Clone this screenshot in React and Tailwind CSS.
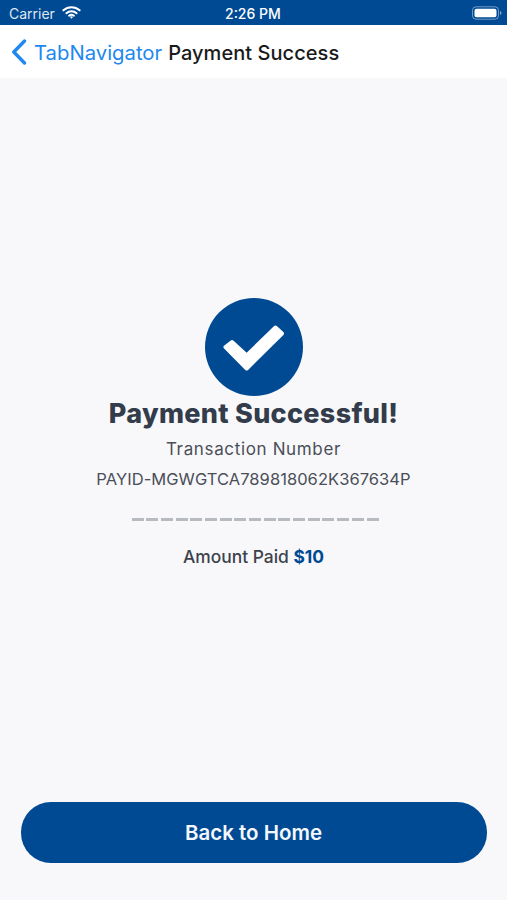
import React from "react";

const sans = "font-['Inter','Liberation_Sans',sans-serif]";

function Wifi() {
  return (
    <svg width="19" height="15" viewBox="0 0 20 15" fill="none" stroke="#fff" strokeLinecap="round">
      <path d="M1.5 5.2C6.2 .9 13.8 .9 18.5 5.2" strokeWidth="2.2" />
      <path d="M4.6 8.2C7.6 5.6 12.4 5.6 15.4 8.2" strokeWidth="2.2" />
      <path d="M7.4 10.9C8.9 9.8 11.1 9.8 12.6 10.9" strokeWidth="2" />
      <path d="M10 14l1.6-1.7a2.3 2.3 0 0 0-3.2 0z" fill="#fff" stroke="none" />
    </svg>
  );
}

function Battery() {
  return (
    <svg width="30" height="14" viewBox="0 0 30 14" fill="none">
      <rect x="0.5" y="0.8" width="26" height="12.4" rx="3.5" stroke="#fff" strokeOpacity="0.45" />
      <rect x="2.5" y="2.8" width="22" height="8.4" rx="2" fill="#fff" />
      <path d="M28 5v4c.9-.3 1.5-1.1 1.5-2s-.6-1.7-1.5-2z" fill="#fff" fillOpacity="0.5" />
    </svg>
  );
}

export default function App() {
  return (
    <div className={`flex h-[900px] w-[507px] flex-col overflow-hidden bg-[#f8f8fb] ${sans}`}>
      <div className="relative flex h-[25px] shrink-0 items-center justify-between bg-[#004a94] pl-[9px] pr-[5px] text-white">
        <div className="flex items-center gap-[7px]">
          <span className="mt-[2px] text-[14px] leading-none text-[#dfe7f1]">Carrier</span>
          <Wifi />
        </div>
        <span className="absolute left-[225px] top-[6px] text-[14px] font-medium leading-[15px]">2:26 PM</span>
        <Battery />
      </div>

      <div className="flex h-[53px] shrink-0 items-center bg-white pl-[11px]">
        <svg width="16" height="26" viewBox="0 0 16 26" fill="none" stroke="#2088ee" strokeWidth="3.4" strokeLinecap="round" strokeLinejoin="round">
          <path d="M13.5 2 2.8 13l10.7 11" />
        </svg>
        <span className="ml-[7px] mt-[3px] text-[20.3px] leading-none text-[#2088ee]">TabNavigator</span>
        <span className="ml-[6px] mt-[3px] text-[20px] font-medium leading-none tracking-[0.05px] text-[#1a1a1a]">Payment Success</span>
      </div>

      <div className="flex flex-1 flex-col items-center pt-[220px]">
        <div className="flex h-[98px] w-[98px] items-center justify-center rounded-full bg-[#004a94]">
          <svg width="64" height="50" viewBox="0 0 64 50" fill="#fff" stroke="#fff" strokeWidth="4" strokeLinejoin="round">
            <path d="M3.5 25 10 20 24.7 33.5 53.5 5.5 60 11.5 24.7 46.5z" />
          </svg>
        </div>
        <h1 className="mt-[1px] h-[34px] whitespace-nowrap text-[27px] font-extrabold leading-[34px] tracking-[0.3px] text-[#333c4a]">Payment Successful!</h1>
        <p className="mt-[6px] h-[24px] text-[17px] leading-[24px] tracking-[0.65px] text-[#4a4f57]">Transaction Number</p>
        <p className="mt-[6px] h-[24px] whitespace-nowrap text-[16.5px] leading-[24px] tracking-[0.05px] text-[#4a4f57]">PAYID-MGWGTCA789818062K367634P</p>
        <div className="ml-[3px] mt-[27px] flex w-[247px] justify-between">
          {Array.from({ length: 17 }, (_, i) => (
            <span key={i} className="h-[3px] w-[12px] bg-[#b7babe]" />
          ))}
        </div>
        <p className="mt-[24px] h-[24px] whitespace-nowrap text-[17.4px] font-medium leading-[24px] text-[#3d434c]">
          Amount Paid <span className="font-bold text-[#004a94]">$10</span>
        </p>
        <div className="flex-1" />
        <button className="mb-[37px] h-[61px] w-[466px] rounded-[30px] bg-[#004a94] pt-[1px] text-[20.5px] font-semibold text-[#f4f7fb]">Back to Home</button>
      </div>
    </div>
  );
}
